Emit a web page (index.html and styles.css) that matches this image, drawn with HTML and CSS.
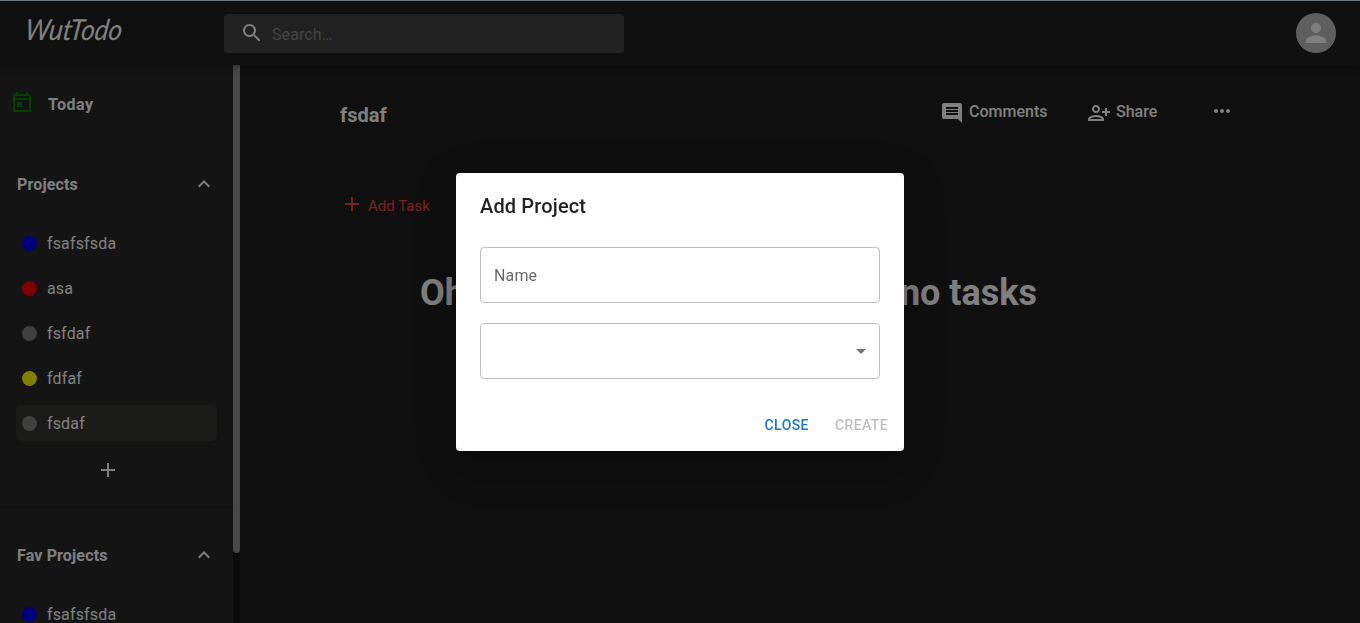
FILE: index.html
```html
<!DOCTYPE html>
<html lang="en">
<head>
<meta charset="utf-8">
<title>WutTodo</title>
<link rel="stylesheet" href="styles.css">
</head>
<body>
<svg class="sprite" aria-hidden="true">
  <symbol id="less" viewBox="0 0 24 24"><path d="M12 8l-6 6 1.41 1.41L12 10.83l4.59 4.58L18 14z"/></symbol>
  <symbol id="add" viewBox="0 0 24 24"><path d="M19 13h-6v6h-2v-6H5v-2h6V5h2v6h6v2z"/></symbol>
</svg>
<div class="app">
  <header class="header">
    <svg class="logo" width="120" height="44" role="img" aria-label="WutTodo"><text transform="translate(2 27) skewX(-8)" textLength="97" lengthAdjust="spacingAndGlyphs">WutTodo</text></svg>
    <div class="search">
      <svg class="icon" viewBox="0 0 24 24"><path d="M15.5 14h-.79l-.28-.27C15.41 12.59 16 11.11 16 9.5 16 5.91 13.09 3 9.5 3S3 5.91 3 9.5 5.91 16 9.5 16c1.61 0 3.09-.59 4.23-1.57l.27.28v.79l5 4.99L20.49 19l-4.99-5zm-6 0C7.01 14 5 11.99 5 9.5S7.01 5 9.5 5 14 7.01 14 9.5 11.99 14 9.5 14z"/></svg>
      <span class="search-text">Search…</span>
    </div>
    <div class="avatar">
      <svg viewBox="0 0 24 24"><path d="M12 12c2.21 0 4-1.79 4-4s-1.79-4-4-4-4 1.79-4 4 1.79 4 4 4zm0 2c-2.67 0-8 1.34-8 4v2h16v-2c0-2.66-5.33-4-8-4z"/></svg>
    </div>
  </header>
  <div class="body">
    <aside class="sidebar">
      <div class="side-content">
        <div class="today">
          <svg class="icon" viewBox="0 0 24 24"><path d="M19 3h-1V1h-2v2H8V1H6v2H5c-1.11 0-1.99.9-1.99 2L3 19c0 1.1.89 2 2 2h14c1.1 0 2-.9 2-2V5c0-1.1-.9-2-2-2zm0 16H5V9h14v10zm0-12H5V5h14v2zM7 11h5v5H7z"/></svg>
          <span>Today</span>
        </div>
        <section class="group">
          <div class="group-head"><span>Projects</span><svg class="icon"><use href="#less"/></svg></div>
          <ul class="list">
            <li class="row"><i class="dot blue"></i><span>fsafsfsda</span></li>
            <li class="row"><i class="dot red"></i><span>asa</span></li>
            <li class="row"><i class="dot gray"></i><span>fsfdaf</span></li>
            <li class="row"><i class="dot yellow"></i><span>fdfaf</span></li>
            <li class="row active"><i class="dot gray"></i><span>fsdaf</span></li>
          </ul>
          <div class="add-project"><svg class="icon"><use href="#add"/></svg></div>
        </section>
        <section class="group">
          <div class="group-head"><span>Fav Projects</span><svg class="icon"><use href="#less"/></svg></div>
          <ul class="list">
            <li class="row"><i class="dot blue"></i><span>fsafsfsda</span></li>
          </ul>
        </section>
      </div>
      <div class="track"><div class="thumb"></div></div>
    </aside>
    <main class="main">
      <div class="title-bar">
        <h1 class="title">fsdaf</h1>
        <div class="actions">
          <span class="action comments"><svg class="icon" viewBox="0 0 24 24"><path d="M21.99 4c0-1.1-.89-2-1.99-2H4c-1.1 0-2 .9-2 2v12c0 1.1.9 2 2 2h14l4 4-.01-18zM18 14H6v-2h12v2zm0-3H6V9h12v2zm0-3H6V6h12v2z"/></svg><span>Comments</span></span>
          <span class="action share"><svg class="icon" viewBox="0 0 24 24"><path d="M13 8c0-2.21-1.79-4-4-4S5 5.79 5 8s1.79 4 4 4 4-1.79 4-4zm-2 0c0 1.1-.9 2-2 2s-2-.9-2-2 .9-2 2-2 2 .9 2 2zM1 18v2h16v-2c0-2.66-5.33-4-8-4s-8 1.34-8 4zm2 0c.2-.71 3.3-2 6-2 2.69 0 5.77 1.28 6 2H3zM20 15v-3h3v-2h-3V7h-2v3h-3v2h3v3h2z"/></svg><span>Share</span></span>
          <svg class="icon more" viewBox="0 0 24 24"><path d="M6 10c-1.1 0-2 .9-2 2s.9 2 2 2 2-.9 2-2-.9-2-2-2zm12 0c-1.1 0-2 .9-2 2s.9 2 2 2 2-.9 2-2-.9-2-2-2zm-6 0c-1.1 0-2 .9-2 2s.9 2 2 2 2-.9 2-2-.9-2-2-2z"/></svg>
        </div>
      </div>
      <div class="add-task"><svg class="icon"><use href="#add"/></svg><span>Add Task</span></div>
      <h2 class="empty"><span>Oh</span><span>no tasks</span></h2>
    </main>
  </div>
</div>
<div class="backdrop">
  <div class="dialog" role="dialog">
    <h2 class="dialog-title">Add Project</h2>
    <div class="fields">
      <div class="field">Name</div>
      <div class="field select"><svg class="icon" viewBox="0 0 24 24"><path d="M7 10l5 5 5-5z"/></svg></div>
    </div>
    <div class="dialog-actions">
      <button class="btn">Close</button>
      <button class="btn" disabled>Create</button>
    </div>
  </div>
</div>
<div class="edge"></div>
</body>
</html>
```
FILE: styles.css
```css
* { box-sizing: border-box; }
body {
  margin: 0;
  height: 623px;
  overflow: hidden;
  background: #1e1e1e;
  color: #fff;
  font: 16px/24px Roboto, sans-serif;
}
.sprite { display: none; }
.icon { width: 24px; height: 24px; fill: currentColor; flex: none; display: block; }
.app { height: 623px; display: flex; flex-direction: column; overflow: hidden; }
.header {
  height: 65px;
  flex: none;
  display: flex;
  align-items: flex-start;
  padding: 13px 24px 0 22px;
  background: #1f1f1f;
  box-shadow: 0 2px 6px rgba(0, 0, 0, .35);
  position: relative;
  z-index: 1;
}
.logo { margin-right: 82px; overflow: visible; fill: #fff; font: italic 400 29px Satisfy, Lato, sans-serif; }
.search {
  width: 400px;
  height: 39px;
  margin-top: 1px;
  padding: 7px 16px;
  display: flex;
  gap: 8px;
  border-radius: 4px;
  background: #424242;
}
.search-text { color: #868686; line-height: 28px; letter-spacing: .1px; }
.avatar {
  width: 40px;
  height: 40px;
  margin-left: auto;
  display: grid;
  place-items: center;
  border-radius: 50%;
  background: #bdbdbd;
}
.avatar svg { width: 30px; height: 30px; fill: #fff; }
.body { flex: 1; display: flex; min-height: 0; }
.sidebar { width: 240px; display: flex; background: #282828; overflow: hidden; letter-spacing: .15px; }
.side-content { width: 233px; flex: none; }
.track { width: 7px; background: #141414; }
.thumb { height: 488px; border-radius: 0 0 4px 4px; background: #909090; }
.today {
  display: flex;
  gap: 14px;
  padding: 26px 10px 0;
  height: 91px;
  font-weight: 700;
  letter-spacing: .5px;
}
.today .icon { fill: #008000; }
.today span { line-height: 28px; }
.group { height: 351px; border-bottom: 1px solid #1c1c1c; padding: 16px 16px 0; }
.group + .group { padding-top: 36px; }
.group-head {
  height: 24px;
  display: flex;
  justify-content: space-between;
  padding: 0 1px;
  font-weight: 700;
  line-height: 26px;
}
.list { list-style: none; margin: 29px 0 0; padding: 0; display: grid; gap: 9px; }
.row {
  width: 201px;
  height: 36px;
  display: flex;
  align-items: center;
  gap: 10px;
  padding-left: 6px;
  border-radius: 5px;
}
.row span { padding-top: 2px; }
.active { background: #343430; }
.dot { width: 15px; height: 15px; border-radius: 50%; }
.blue { background: #0000ff; }
.red { background: #ff0000; }
.gray { background: #808080; }
.yellow { background: #ffff00; }
.add-project { padding: 17px 0 0 80px; }
.main { flex: 1; padding: 34px 126px 0 100px; }
.title-bar { height: 28px; display: flex; justify-content: space-between; }
.title { margin: 4px 0 0; font-size: 20px; font-weight: 700; }
.actions { display: flex; font-weight: 500; }
.action { display: flex; gap: 5px; line-height: 26px; }
.action .icon { margin-top: 2px; }
.comments { width: 147px; }
.share { width: 123px; }
.add-task { height: 27px; display: flex; gap: 4px; margin-top: 65px; color: #ef4444; font-size: 15px; }
.add-task span { line-height: 29px; }
.empty {
  width: 617px;
  margin: 51px 0 0 80px;
  display: flex;
  justify-content: space-between;
  font-size: 36px;
  line-height: 46px;
  font-weight: 700;
  white-space: nowrap;
}
.backdrop {
  position: fixed;
  inset: 0;
  display: grid;
  place-items: center;
  background: rgba(0, 0, 0, .5);
  z-index: 10;
}
.edge { position: fixed; top: 0; left: 0; right: 0; height: 1px; background: #6b7a82; z-index: 11; }
.dialog {
  width: 448px;
  height: 278px;
  margin-top: 1px;
  padding: 17px 0 0;
  border-radius: 4px;
  background: #fff;
  color: rgba(0, 0, 0, .87);
  box-shadow: 0 11px 15px -7px rgba(0, 0, 0, .2), 0 24px 38px 3px rgba(0, 0, 0, .14), 0 9px 46px 8px rgba(0, 0, 0, .12);
}
.dialog-title { margin: 0; padding: 0 24px; font-size: 20px; line-height: 32px; font-weight: 500; letter-spacing: .15px; }
.fields { display: grid; gap: 20px; padding: 25px 24px 0; }
.field {
  height: 56px;
  padding: 2px 13px 0;
  display: flex;
  align-items: center;
  border: 1px solid #c0c0c0;
  border-radius: 4px;
  color: rgba(0, 0, 0, .6);
  letter-spacing: .15px;
}
.select { justify-content: flex-end; padding: 0 6px 0 13px; color: rgba(0, 0, 0, .54); }
.dialog-actions { display: flex; justify-content: flex-end; gap: 10px; padding: 27px 8px 0; }
.btn {
  height: 37px;
  padding: 0 8px;
  border: 0;
  background: none;
  color: #1976d2;
  font: 500 14px/24px Roboto, sans-serif;
  letter-spacing: .4px;
  text-transform: uppercase;
}
.btn:disabled { color: rgba(0, 0, 0, .26); }
```
